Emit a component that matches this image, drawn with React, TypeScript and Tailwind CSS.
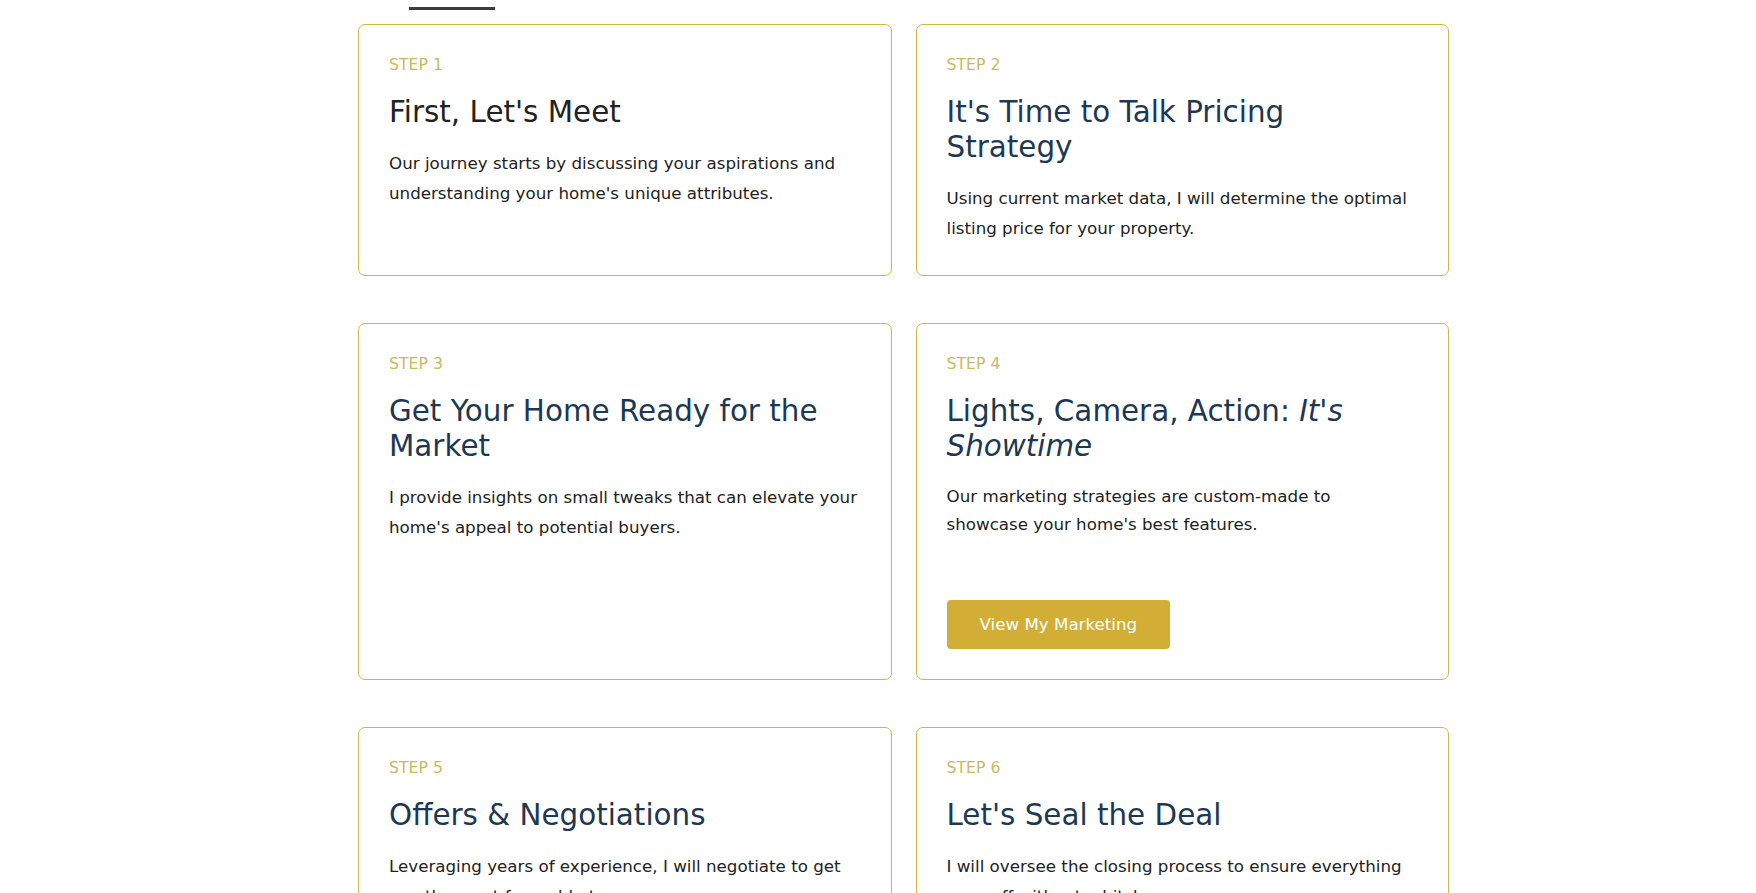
import type { ReactNode } from "react";

type Step = {
  n: number;
  title: ReactNode;
  body: string;
  dark?: boolean;
  cta?: string;
};

const steps: Step[] = [
  {
    n: 1,
    title: <>First, Let's Meet</>,
    dark: true,
    body: "Our journey starts by discussing your aspirations and understanding your home's unique attributes.",
  },
  {
    n: 2,
    title: (
      <>
        It's Time to Talk Pricing
        <br />
        Strategy
      </>
    ),
    body: "Using current market data, I will determine the optimal listing price for your property.",
  },
  {
    n: 3,
    title: (
      <>
        Get Your Home Ready for the
        <br />
        Market
      </>
    ),
    body: "I provide insights on small tweaks that can elevate your home's appeal to potential buyers.",
  },
  {
    n: 4,
    title: (
      <>
        Lights, Camera, Action: <em>It's</em>
        <br />
        <em>Showtime</em>
      </>
    ),
    body: "Our marketing strategies are custom-made to showcase your home's best features.",
    cta: "View My Marketing",
  },
  {
    n: 5,
    title: <>Offers &amp; Negotiations</>,
    body: "Leveraging years of experience, I will negotiate to get you the most favorable terms.",
  },
  {
    n: 6,
    title: <>Let's Seal the Deal</>,
    body: "I will oversee the closing process to ensure everything goes off without a hitch.",
  },
];

function StepCard({ step }: { step: Step }) {
  return (
    <div
      className={`flex flex-col rounded-[7px] border border-[#d4b446] bg-white px-[30px] pt-[31px] ${
        step.cta ? "pb-[30px]" : "pb-[32px]"
      }`}
    >
      <div className="text-[15.7px] leading-[18px] uppercase text-[#cfb65e]">Step {step.n}</div>
      <h3
        className={`mt-[21px] text-[29.4px] font-normal leading-[35px] ${
          step.dark ? "text-[#222222]" : "text-[#1c3853]"
        }`}
      >
        {step.title}
      </h3>
      <p
        className={`mt-[18px] text-[16.7px] text-[#222222] ${
          step.cta ? "max-w-[410px] leading-[28px]" : "leading-[30px]"
        }`}
      >
        {step.body}
      </p>
      {step.cta && (
        <div className="mt-[62px]">
          <button className="h-[49px] rounded-[4px] bg-[#d3ae37] px-[33px] text-[16.7px] text-white">
            {step.cta}
          </button>
        </div>
      )}
    </div>
  );
}

export default function App() {
  return (
    <div className="min-h-screen bg-white font-['DejaVu_Sans',sans-serif]">
      <div className="ml-[358px] w-[1091px] pt-[7px] pb-16">
        <div className="ml-[51px] h-[3px] w-[86px] bg-[#3d3d3d]" />
        <div className="mt-[14px] grid grid-cols-2 gap-x-6 gap-y-[47px]">
          {steps.map((s) => (
            <StepCard key={s.n} step={s} />
          ))}
        </div>
      </div>
    </div>
  );
}
